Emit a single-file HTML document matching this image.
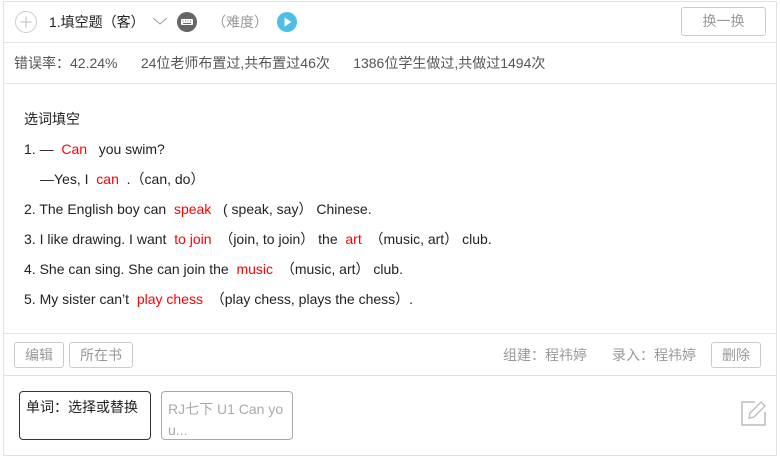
<!DOCTYPE html>
<html><head><meta charset="utf-8"><style>
*{margin:0;padding:0;box-sizing:border-box}
body{width:780px;height:461px;background:#fff;font-family:"Liberation Sans","Noto Sans CJK SC",sans-serif;font-size:14px;color:#333;position:relative;overflow:hidden}
.a{position:absolute;white-space:nowrap;line-height:16px}
.box{position:absolute;left:3px;top:1px;width:774px;height:455px;border:1px solid #e2e2e2}
.hl{position:absolute;left:3px;width:774px;height:1px;background:#e2e2e2}
.r{color:#f00}
.btn{position:absolute;border:1px solid #ccc;border-radius:3px;color:#999;text-align:center;font-size:14px}
</style></head><body>
<div class="box"></div>
<div class="hl" style="top:42px"></div>
<div class="hl" style="top:83px"></div>
<div class="hl" style="top:333px"></div>
<div class="hl" style="top:375px"></div>

<svg class="a" style="left:14px;top:10px" width="24" height="24"><circle cx="12" cy="12" r="10.5" fill="none" stroke="#ccc" stroke-width="1"/><path d="M12 6.5v11M6.5 12h11" stroke="#bbb" stroke-width="1"/></svg>
<div class="a" style="left:49px;top:14px;font-size:14px;color:#222">1.填空题（客）</div>
<svg class="a" style="left:152px;top:16px" width="16" height="10"><path d="M1 2l7 6 7-6" fill="none" stroke="#999" stroke-width="1"/></svg>
<svg class="a" style="left:176px;top:11px" width="22" height="22"><circle cx="11" cy="11" r="10" fill="#666"/><rect x="5" y="8" width="12" height="6" rx="1" fill="#fff"/><path d="M6.5 10h1M9 10h1M11.5 10h1M14 10h1M7 12.5h8" stroke="#666" stroke-width="1"/></svg>
<div class="a" style="left:212px;top:14px;color:#999">（难度）</div>
<svg class="a" style="left:276px;top:11px" width="22" height="22"><circle cx="11" cy="11" r="10" fill="#4dbfe6"/><path d="M8.5 6.5l7 4.5-7 4.5z" fill="#fff"/></svg>
<div class="btn" style="left:681px;top:7px;width:85px;height:29px;line-height:27px">换一换</div>

<div class="a" style="left:14px;top:55px;color:#555">错误率：42.24%&nbsp;&nbsp;&nbsp;&nbsp;&nbsp;&nbsp;24位老师布置过,共布置过46次&nbsp;&nbsp;&nbsp;&nbsp;&nbsp;&nbsp;1386位学生做过,共做过1494次</div>

<div class="a" style="left:24px;top:111px;color:#222">选词填空</div>
<div class="a" style="left:24px;top:141px;color:#222">1. — &nbsp;<span class="r">Can</span> &nbsp; you swim?</div>
<div class="a" style="left:40px;top:171px;color:#222">—Yes, I &nbsp;<span class="r">can</span> &nbsp;.（can, do）</div>
<div class="a" style="left:24px;top:201px;color:#222">2. The English boy can &nbsp;<span class="r">speak</span> &nbsp; ( speak, say） Chinese.</div>
<div class="a" style="left:24px;top:231px;color:#222">3. I like drawing. I want &nbsp;<span class="r">to join</span> &nbsp;（join, to join） the &nbsp;<span class="r">art</span> &nbsp;（music, art） club.</div>
<div class="a" style="left:24px;top:261px;color:#222">4. She can sing. She can join the &nbsp;<span class="r">music</span> &nbsp;（music, art） club.</div>
<div class="a" style="left:24px;top:291px;color:#222">5. My sister can’t &nbsp;<span class="r">play chess</span> &nbsp;（play chess, plays the chess）.</div>

<div class="btn" style="left:14px;top:342px;width:50px;height:26px;line-height:24px">编辑</div>
<div class="btn" style="left:69px;top:342px;width:64px;height:26px;line-height:24px">所在书</div>
<div class="a" style="left:503px;top:347px;color:#999">组建：程祎婷</div>
<div class="a" style="left:612px;top:347px;color:#999">录入：程祎婷</div>
<div class="btn" style="left:711px;top:342px;width:50px;height:26px;line-height:24px">删除</div>

<div class="a" style="left:19px;top:391px;width:132px;height:49px;border:1px solid #333;border-radius:4px"></div>
<div class="a" style="left:26px;top:399px;color:#222">单词：选择或替换</div>
<div class="a" style="left:161px;top:391px;width:132px;height:49px;border:1px solid #aaa;border-radius:4px"></div>
<div class="a" style="left:168px;top:399px;color:#aaa;line-height:21px">RJ七下 U1 Can yo<br>u...</div>
<svg class="a" style="left:740px;top:399px" width="28" height="28"><path d="M15 3H2v23h23V13" fill="none" stroke="#bbb" stroke-width="1.5"/><path d="M9 19l1-5L21 3l4 4L14 18z" fill="none" stroke="#bbb" stroke-width="1.3"/></svg>
</body></html>
